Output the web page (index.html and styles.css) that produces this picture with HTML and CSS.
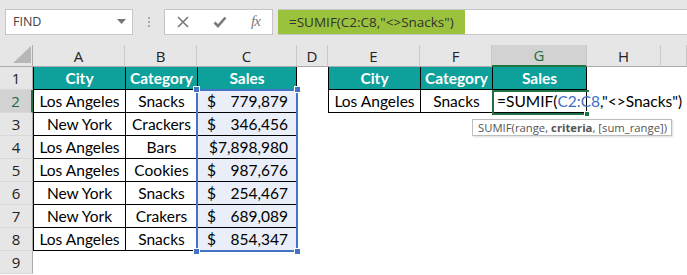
FILE: index.html
```html
<!DOCTYPE html>
<html lang="en">
<head>
    <meta charset="UTF-8">
    <title>SUMIF not equal</title>
    <link rel="stylesheet" href="styles.css">
</head>
<body>

<div class="app">
    <!-- formula bar -->
    <div class="formula-bar">
        <div class="name-box">
            <span>FIND</span>
            <svg class="drop" width="9" height="5" viewBox="0 0 9 5"><path d="M0 0h9L4.5 5z" fill="#767676"/></svg>
        </div>
        <div class="grip"><i></i><i></i><i></i></div>
        <div class="fx-buttons">
            <svg width="12" height="12" viewBox="0 0 12 12"><path d="M1 1L11 11M11 1L1 11" stroke="#7a7a7a" stroke-width="1.6" fill="none"/></svg>
            <svg width="14" height="12" viewBox="0 0 14 12"><path d="M1.5 6.5L5 10L12.5 1.5" stroke="#7a7a7a" stroke-width="2.6" fill="none"/></svg>
            <span class="fx">fx</span>
        </div>
        <div class="formula-input">
            <div class="formula-green">=SUMIF(C2:C8,"&lt;&gt;Snacks")</div>
        </div>
    </div>

    <!-- worksheet -->
    <div class="sheet">
        <div class="corner"><svg width="18" height="17" viewBox="0 0 18 17"><path d="M18 0V17H0z" fill="#b7b7b7"/></svg></div>
        <div class="ch">A</div>
        <div class="ch">B</div>
        <div class="ch">C</div>
        <div class="ch">D</div>
        <div class="ch">E</div>
        <div class="ch">F</div>
        <div class="ch on">G</div>
        <div class="ch">H</div>
        <div class="ch"></div>

        <div class="rh">1</div>
        <div class="cell head">City</div>
        <div class="cell head">Category</div>
        <div class="cell head last">Sales</div>
        <div class="blank"></div>
        <div class="cell head">City</div>
        <div class="cell head">Category</div>
        <div class="cell head last">Sales</div>
        <div class="blank span2"></div>

        <div class="rh on">2</div>
        <div class="cell">Los Angeles</div>
        <div class="cell">Snacks</div>
        <div class="cell money last"><span>$</span><span>779,879</span></div>
        <div class="blank"></div>
        <div class="cell">Los Angeles</div>
        <div class="cell">Snacks</div>
        <div class="cell edit last">=SUMIF(<span class="ref">C2:C8</span>,"&lt;&gt;Snacks")<span class="caret"></span></div>
        <div class="blank span2"></div>

        <div class="rh">3</div>
        <div class="cell">New York</div>
        <div class="cell">Crackers</div>
        <div class="cell money last"><span>$</span><span>346,456</span></div>
        <div class="blank span6"></div>

        <div class="rh">4</div>
        <div class="cell">Los Angeles</div>
        <div class="cell">Bars</div>
        <div class="cell money full last"><span>$7,898,980</span></div>
        <div class="blank span6"></div>

        <div class="rh">5</div>
        <div class="cell">Los Angeles</div>
        <div class="cell">Cookies</div>
        <div class="cell money last"><span>$</span><span>987,676</span></div>
        <div class="blank span6"></div>

        <div class="rh">6</div>
        <div class="cell">New York</div>
        <div class="cell">Snacks</div>
        <div class="cell money last"><span>$</span><span>254,467</span></div>
        <div class="blank span6"></div>

        <div class="rh">7</div>
        <div class="cell">New York</div>
        <div class="cell">Crakers</div>
        <div class="cell money last"><span>$</span><span>689,089</span></div>
        <div class="blank span6"></div>

        <div class="rh">8</div>
        <div class="cell">Los Angeles</div>
        <div class="cell">Snacks</div>
        <div class="cell money last"><span>$</span><span>854,347</span></div>
        <div class="blank span6"></div>

        <div class="rh">9</div>
        <div class="blank span9"></div>

        <!-- range being referenced by the formula -->
        <div class="range">
            <i class="h tl"></i><i class="h tr"></i><i class="h bl"></i><i class="h br"></i>
        </div>
        <!-- active cell G2 -->
        <div class="active"><i class="fill"></i></div>
        <!-- function tooltip -->
        <div class="tip">SUMIF(range, <b>criteria</b>, [sum_range])</div>
    </div>
</div>

</body>
</html>
```

FILE: styles.css
```css
body, html {
    margin: 0;
    padding: 0;
    overflow: hidden;
    background: #fff;
}
.app {
    width: 687px;
    height: 275px;
    font-family: "Open Sans", "Noto Sans", sans-serif;
}

/* formula bar */
.formula-bar {
    display: flex;
    align-items: center;
    height: 45px;
    box-sizing: border-box;
    padding: 0 0 2px 5px;
    background: #e6e6e6;
}
.name-box {
    width: 128px;
    height: 26px;
    box-sizing: border-box;
    display: flex;
    align-items: center;
    justify-content: space-between;
    padding: 0 6px 0 7px;
    background: #fff;
    border: 1px solid #c6c6c6;
    font-size: 12.5px;
    color: #444;
}
.grip {
    width: 31px;
    display: flex;
    flex-direction: column;
    align-items: center;
    gap: 2px;
}
.grip i {
    width: 2px;
    height: 2px;
    background: #aaa;
}
.fx-buttons {
    width: 109px;
    height: 26px;
    box-sizing: border-box;
    display: flex;
    align-items: center;
    justify-content: space-around;
    background: #fff;
    border: 1px solid #c6c6c6;
}
.fx {
    font-family: "Liberation Serif", serif;
    font-style: italic;
    font-size: 15px;
    color: #7a7a7a;
    letter-spacing: -1px;
}
.formula-input {
    flex: 1;
    height: 26px;
    margin-left: 5px;
    box-sizing: border-box;
    background: #fff;
    border-top: 1px solid #c6c6c6;
    border-bottom: 1px solid #c6c6c6;
    display: flex;
}
.formula-green {
    width: 187px;
    box-sizing: border-box;
    padding-left: 11px;
    background: #9bc23c;
    color: #333;
    font-size: 13.5px;
    line-height: 24px;
    white-space: nowrap;
}

/* worksheet grid */
.sheet {
    position: relative;
    display: grid;
    grid-template-columns: 33px 92px 72px 100px 31px 92px 72px 95px 74px 26px;
    grid-template-rows: 22px repeat(9, 23px);
    font-family: Lato, "Open Sans", sans-serif;
    font-size: 15.5px;
}
.corner {
    background: #e6e6e6;
    border-right: 1px solid #ababab;
    border-bottom: 1px solid #ababab;
    display: flex;
    align-items: flex-end;
    justify-content: flex-end;
    padding: 0 1px 3px 0;
}
.ch {
    background: #e6e6e6;
    border-right: 1px solid #c9c9c9;
    border-bottom: 1px solid #ababab;
    display: flex;
    align-items: center;
    justify-content: center;
    font-family: "Open Sans", sans-serif;
    font-size: 15px;
    color: #222;
}
.ch.on {
    background: #d2d2d2;
    border-bottom: 2px solid #217346;
    color: #1d6b41;
}
.rh {
    background: #e6e6e6;
    border-right: 1px solid #ababab;
    border-bottom: 1px solid #d8d8d8;
    display: flex;
    align-items: center;
    justify-content: center;
    font-family: "Open Sans", sans-serif;
    font-size: 15px;
    color: #222;
}
.rh.on {
    background: #d2d2d2;
    border-right: 2px solid #217346;
    color: #1d6b41;
}
.corner, .ch, .rh, .cell, .blank {
    box-sizing: border-box;
}
.cell {
    display: flex;
    align-items: center;
    justify-content: center;
    border-left: 1px solid #000;
    border-bottom: 1px solid #000;
    white-space: nowrap;
    color: #000;
}
.cell.last {
    border-right: 1px solid #000;
}
.head {
    background: #0ea09a;
    color: #fff;
    font-weight: 700;
}
.money {
    justify-content: space-between;
    padding: 0 8px 0 9px;
    background: #e9eef8;
}
.money.full {
    justify-content: flex-end;
}
.edit {
    justify-content: flex-start;
    padding-left: 4px;
    overflow: visible;
    position: relative;
    z-index: 2;
}
.edit .ref {
    color: #3f6fc4;
}
.caret {
    display: inline-block;
    width: 1px;
    height: 17px;
    margin-left: 2px;
    background: #000;
}
.span2 { grid-column: span 2; }
.span6 { grid-column: span 6; }
.span9 { grid-column: span 9; }

/* overlays */
.range {
    position: absolute;
    left: 196px;
    top: 44px;
    width: 102px;
    height: 163px;
    box-sizing: border-box;
    border: 2px solid #4472c4;
    pointer-events: none;
}
.h {
    position: absolute;
    width: 5px;
    height: 5px;
    background: #4472c4;
    border: 1px solid #fff;
}
.tl { left: -5px; top: -5px; }
.tr { right: -5px; top: -5px; }
.bl { left: -5px; bottom: -5px; }
.br { right: -5px; bottom: -5px; }
.active {
    position: absolute;
    left: 492px;
    top: 45px;
    width: 97px;
    height: 25px;
    box-sizing: border-box;
    border: 2px solid #217346;
    border-right: none;
    z-index: 3;
}
.fill {
    position: absolute;
    right: -1px;
    bottom: -4px;
    width: 4px;
    height: 4px;
    background: #217346;
    border: 1px solid #fff;
}
.tip {
    position: absolute;
    left: 472px;
    top: 74px;
    width: 200px;
    height: 17px;
    box-sizing: border-box;
    padding-left: 5px;
    background: #fff;
    border: 1px solid #bdbdbd;
    box-shadow: 1px 1px 2px rgba(0, 0, 0, 0.15);
    font-family: "Open Sans", sans-serif;
    font-size: 11.3px;
    line-height: 15px;
    color: #555;
    white-space: nowrap;
    z-index: 4;
}
```
